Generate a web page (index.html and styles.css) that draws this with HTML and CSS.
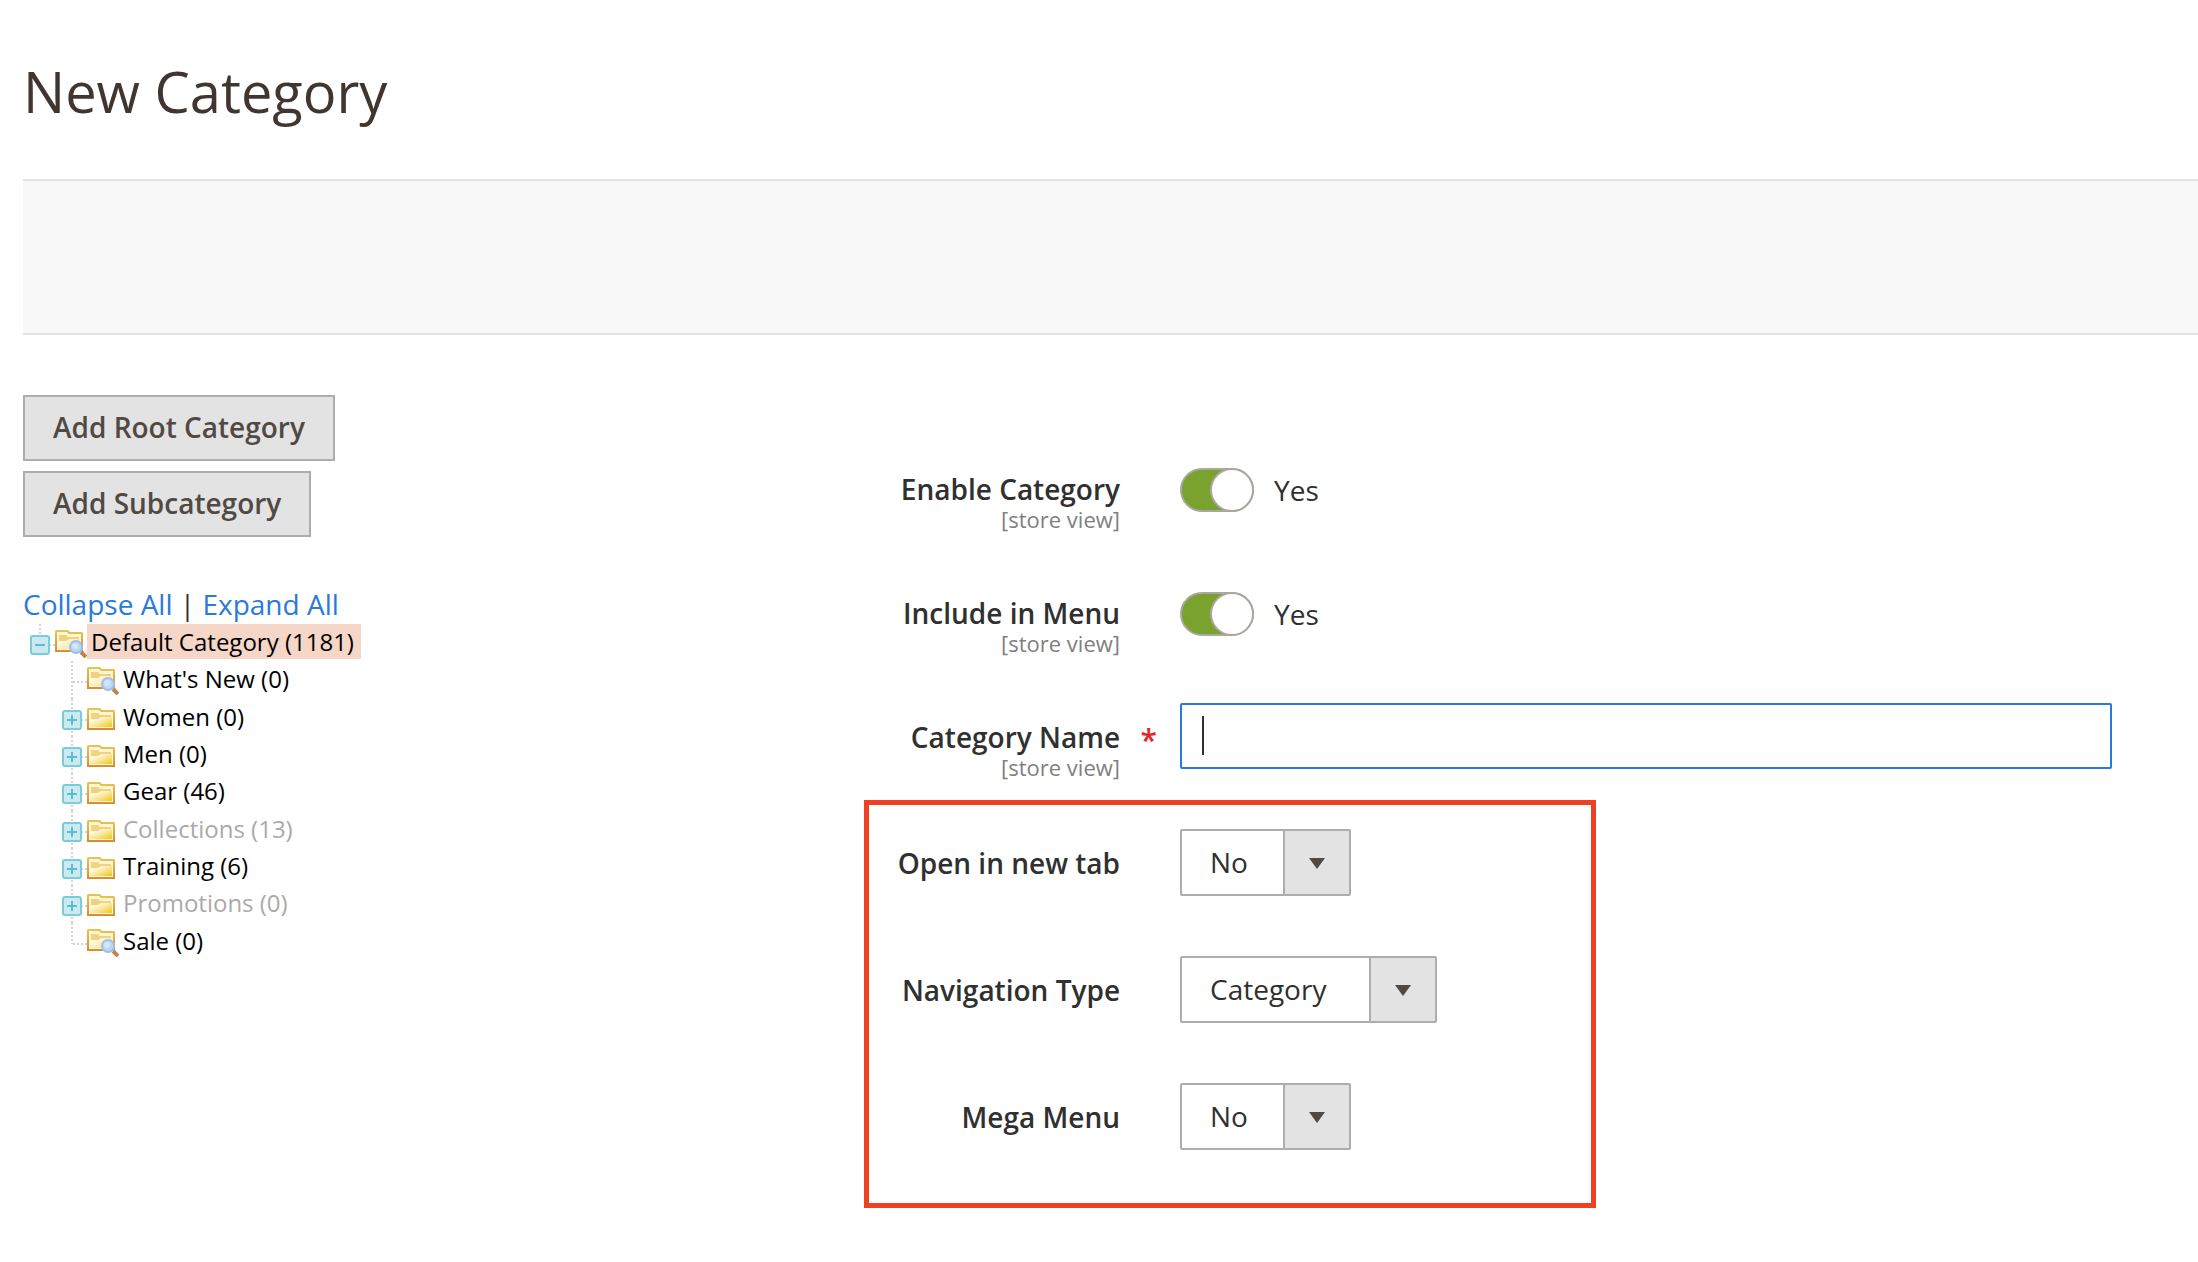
FILE: index.html
```html
<!DOCTYPE html>
<html lang="en">
<head>
<meta charset="utf-8">
<meta name="viewport" content="width=device-width, initial-scale=1">
<title>New Category</title>
<link rel="stylesheet" href="styles.css">
</head>
<body>
<svg class="sprite" aria-hidden="true">
  <defs>
    <linearGradient id="paper" x1="0" y1="0" x2="1" y2="1">
      <stop offset="0.2" stop-color="#fffbe9"/><stop offset="0.55" stop-color="#f8e697"/><stop offset="0.9" stop-color="#f0cd2f"/>
    </linearGradient>
    <linearGradient id="paper-light" x1="0" y1="0" x2="1" y2="1">
      <stop offset="0.2" stop-color="#fffbe9"/><stop offset="1" stop-color="#f3dc80"/>
    </linearGradient>
    <linearGradient id="edge" x1="0" y1="0" x2="0" y2="1">
      <stop offset="0" stop-color="#e6c658"/><stop offset="1" stop-color="#d98b32"/>
    </linearGradient>
    <symbol id="folder" viewBox="0 0 32 28">
      <path d="M0 1 1 0h12l2 2h12l1 1v19H0z" fill="url(#edge)"/>
      <path d="M2 2h10l2 2h12v16H2z" fill="#fff6d2"/>
      <path d="M3 12h9l3-3h10v10H3z" fill="url(#paper)"/>
      <path d="M4 5h7l2 2h11v2H14l-3 2H4z" fill="#f1d27e"/>
    </symbol>
    <symbol id="folder-search" viewBox="0 0 32 28">
      <path d="M0 1 1 0h12l2 2h12l1 1v19H0z" fill="url(#edge)"/>
      <path d="M2 2h10l2 2h12v16H2z" fill="#fff6d2"/>
      <path d="M3 12h9l3-3h10v10H3z" fill="url(#paper-light)"/>
      <path d="M4 5h7l2 2h11v2H14l-3 2H4z" fill="#f1d27e"/>
      <path d="m26 22 5 5" stroke="#bd8450" stroke-width="4"/>
      <circle cx="21" cy="17" r="6" fill="#bdd8f6" stroke="#a3bfe6" stroke-width="2"/>
      <circle cx="20" cy="16" r="3" fill="#d3e7fb"/>
    </symbol>
    <symbol id="plus" viewBox="0 0 20 20">
      <rect x="1" y="1" width="18" height="18" rx="2" fill="#cbe9ef" stroke="#7accdb" stroke-width="2"/>
      <path d="M5 10h10M10 5v10" stroke="#53bfd3" stroke-width="2"/>
    </symbol>
    <symbol id="minus" viewBox="0 0 20 20">
      <rect x="1" y="1" width="18" height="18" rx="2" fill="#cbe9ef" stroke="#7accdb" stroke-width="2"/>
      <path d="M5 10h10" stroke="#53bfd3" stroke-width="2"/>
    </symbol>
  </defs>
</svg>

<header class="page-header">
  <h1 class="page-title">New Category</h1>
</header>
<div class="page-actions"></div>

<main class="page-content">
  <aside class="sidebar">
    <div class="sidebar-actions">
      <button class="button" type="button">Add Root Category</button>
      <button class="button" type="button">Add Subcategory</button>
    </div>
    <div class="tree-controls"><a href="#">Collapse All</a> <span>|</span> <a href="#">Expand All</a></div>
    <ul class="tree">
      <li class="node node-root"><span class="elbow"><svg class="toggle-icon"><use href="#minus"/></svg></span><svg class="folder folder-leaf"><use href="#folder-search"/></svg><a class="node-name selected" href="#">Default Category (1181)</a></li>
      <li class="node"><span class="elbow elbow-leaf"></span><svg class="folder folder-leaf"><use href="#folder-search"/></svg><a class="node-name" href="#">What's New (0)</a></li>
      <li class="node"><span class="elbow"><svg class="toggle-icon"><use href="#plus"/></svg></span><svg class="folder"><use href="#folder"/></svg><a class="node-name" href="#">Women (0)</a></li>
      <li class="node"><span class="elbow"><svg class="toggle-icon"><use href="#plus"/></svg></span><svg class="folder"><use href="#folder"/></svg><a class="node-name" href="#">Men (0)</a></li>
      <li class="node"><span class="elbow"><svg class="toggle-icon"><use href="#plus"/></svg></span><svg class="folder"><use href="#folder"/></svg><a class="node-name" href="#">Gear (46)</a></li>
      <li class="node"><span class="elbow"><svg class="toggle-icon"><use href="#plus"/></svg></span><svg class="folder"><use href="#folder"/></svg><a class="node-name inactive" href="#">Collections (13)</a></li>
      <li class="node"><span class="elbow"><svg class="toggle-icon"><use href="#plus"/></svg></span><svg class="folder"><use href="#folder"/></svg><a class="node-name" href="#">Training (6)</a></li>
      <li class="node"><span class="elbow"><svg class="toggle-icon"><use href="#plus"/></svg></span><svg class="folder"><use href="#folder"/></svg><a class="node-name inactive" href="#">Promotions (0)</a></li>
      <li class="node"><span class="elbow elbow-leaf elbow-end"></span><svg class="folder folder-leaf"><use href="#folder-search"/></svg><a class="node-name" href="#">Sale (0)</a></li>
    </ul>
  </aside>

  <form class="category-form">
    <div class="fields">
      <div class="field">
        <div class="field-label"><label for="enable">Enable Category</label><span class="scope">[store view]</span></div>
        <div class="switch-control"><input class="switch" id="enable" type="checkbox" checked><span>Yes</span></div>
      </div>
      <div class="field">
        <div class="field-label"><label for="in-menu">Include in Menu</label><span class="scope">[store view]</span></div>
        <div class="switch-control"><input class="switch" id="in-menu" type="checkbox" checked><span>Yes</span></div>
      </div>
      <div class="field">
        <div class="field-label"><label for="name">Category Name</label><span class="scope">[store view]</span><span class="required">*</span></div>
        <div class="text-control"><input class="text-input" id="name" type="text" required></div>
      </div>
    </div>
    <fieldset class="highlighted">
      <div class="field">
        <div class="field-label"><label for="new-tab">Open in new tab</label></div>
        <div class="select-control"><select class="select" id="new-tab"><option>No</option><option>Yes</option></select></div>
      </div>
      <div class="field">
        <div class="field-label"><label for="nav-type">Navigation Type</label></div>
        <div class="select-control"><select class="select select-wide" id="nav-type"><option>Category</option></select></div>
      </div>
      <div class="field">
        <div class="field-label"><label for="mega">Mega Menu</label></div>
        <div class="select-control"><select class="select" id="mega"><option>No</option><option>Yes</option></select></div>
      </div>
    </fieldset>
  </form>
</main>
</body>
</html>
```
FILE: styles.css
```css
*,
*::before,
*::after {
  box-sizing: border-box;
}

body {
  margin: 0;
  padding-left: 23px;
  background: #fff;
  color: #303030;
  font-family: "Open Sans", "Noto Sans", sans-serif;
  font-size: 28px;
  line-height: 38px;
}

a {
  color: #2a7adb;
  text-decoration: none;
}

.sprite {
  position: absolute;
  width: 0;
  height: 0;
}

.page-header {
  padding: 53px 0 50px;
}

.page-title {
  margin: 0;
  color: #41362f;
  font-size: 56px;
  font-weight: 400;
  line-height: 76px;
}

.page-actions {
  height: 156px;
  border-top: 2px solid #e3e3e3;
  border-bottom: 2px solid #e3e3e3;
  background: #f8f8f8;
}

.page-content {
  display: grid;
  grid-template-columns: 31fr 46fr;
  align-items: start;
  padding: 60px 86px 53px 0;
}

/* Sidebar */

.sidebar-actions {
  display: flex;
  flex-direction: column;
  align-items: flex-start;
  gap: 10px;
}

.button {
  height: 66px;
  padding: 0 28px 2px;
  border: 2px solid #adadad;
  background: #e3e3e3;
  color: #514943;
  font: inherit;
  font-weight: 600;
}

.tree-controls {
  margin-top: 48px;
}

.tree {
  display: grid;
  grid-auto-rows: 1fr;
  min-height: 336px;
  margin: 1px 0 0;
  padding: 0;
  list-style: none;
  font-size: 24px;
  line-height: 35px;
}

.node {
  display: flex;
  align-items: stretch;
  padding-left: 32px;
}

.node-root {
  padding-left: 0;
}

.elbow {
  width: 32px;
  background:
    repeating-linear-gradient(#d4d4d4 0 2px, transparent 2px 4px) 16px 0 / 2px 100% no-repeat,
    repeating-linear-gradient(90deg, transparent 0 2px, #d4d4d4 2px 4px) 16px 20px / 16px 2px no-repeat;
}

.node-root .elbow {
  background-size: 2px 12px, 16px 2px;
}

.elbow-leaf {
  background-position: 16px 0, 16px 20px;
}

.elbow-end {
  background-size: 2px 21px, 16px 2px;
}

.toggle-icon {
  display: block;
  width: 20px;
  height: 20px;
  margin: 11px 0 0 7px;
}

.folder {
  width: 32px;
  height: 28px;
  margin-top: 9px;
}

.folder-leaf {
  margin-top: 6px;
}

.node-name {
  align-self: flex-start;
  padding: 0 7px 0 4px;
  color: #000;
}

.node-name.selected {
  background: #f5d6c7;
}

.node-name.inactive {
  color: #aaa;
}

/* Form */

.category-form {
  padding-top: 60px;
}

.fields {
  display: grid;
  gap: 49px;
  padding-left: 5px;
}

.field {
  display: grid;
  grid-template-columns: 251px minmax(0, 1fr);
  column-gap: 60px;
}

.field-label {
  position: relative;
  display: flex;
  flex-direction: column;
  padding-top: 15px;
  font-weight: 600;
  text-align: right;
}

.scope {
  color: #808080;
  font-size: 22px;
  font-weight: 400;
  line-height: 22px;
}

.required {
  position: absolute;
  top: 18px;
  right: -37px;
  color: #e22626;
  font-size: 30px;
}

.switch-control {
  display: flex;
  align-items: center;
  align-self: start;
  gap: 20px;
  padding-top: 13px;
}

.switch {
  width: 74px;
  height: 44px;
  margin: 0;
  border: 2px solid #aaa6a0;
  border-radius: 22px;
  appearance: none;
  background: #fff;
}

.switch::before {
  content: "";
  display: block;
  width: 44px;
  height: 44px;
  margin: -2px;
  border: 2px solid #aaa6a0;
  border-radius: 50%;
  background: #fff;
}

.switch:checked {
  background: #79a22e;
}

.switch:checked::before {
  margin-left: 28px;
}

.text-control {
  position: relative;
}

.text-input {
  display: block;
  width: 100%;
  height: 66px;
  padding: 0 20px;
  border: 2px solid #2a7adb;
  border-radius: 2px;
  outline: 0;
  background: #fff;
  caret-color: transparent;
  color: #303030;
  font: inherit;
}

/* Text caret of the active field */
.text-control::after {
  content: "";
  position: absolute;
  top: 13px;
  left: 22px;
  width: 2px;
  height: 39px;
  background: #303030;
}

.highlighted {
  display: grid;
  gap: 60px;
  max-width: 732px;
  min-width: 0;
  margin: 22px 0 0;
  padding: 24px 0 53px;
  border: 5px solid #ee4023;
}

.select-control {
  position: relative;
  justify-self: start;
}

.select {
  display: block;
  width: 171px;
  height: 67px;
  padding: 0 68px 2px 28px;
  border: 2px solid #adadad;
  border-radius: 2px;
  appearance: none;
  background: linear-gradient(90deg, #adadad 2px, #e3e3e3 2px) right / 66px 100% no-repeat #fff;
  color: #303030;
  font: inherit;
}

.select-wide {
  width: 257px;
}

.select-control::after {
  content: "";
  position: absolute;
  top: 29px;
  right: 26px;
  width: 16px;
  height: 11px;
  background: #514943;
  clip-path: polygon(0 0, 100% 0, 50% 100%);
  pointer-events: none;
}
```
